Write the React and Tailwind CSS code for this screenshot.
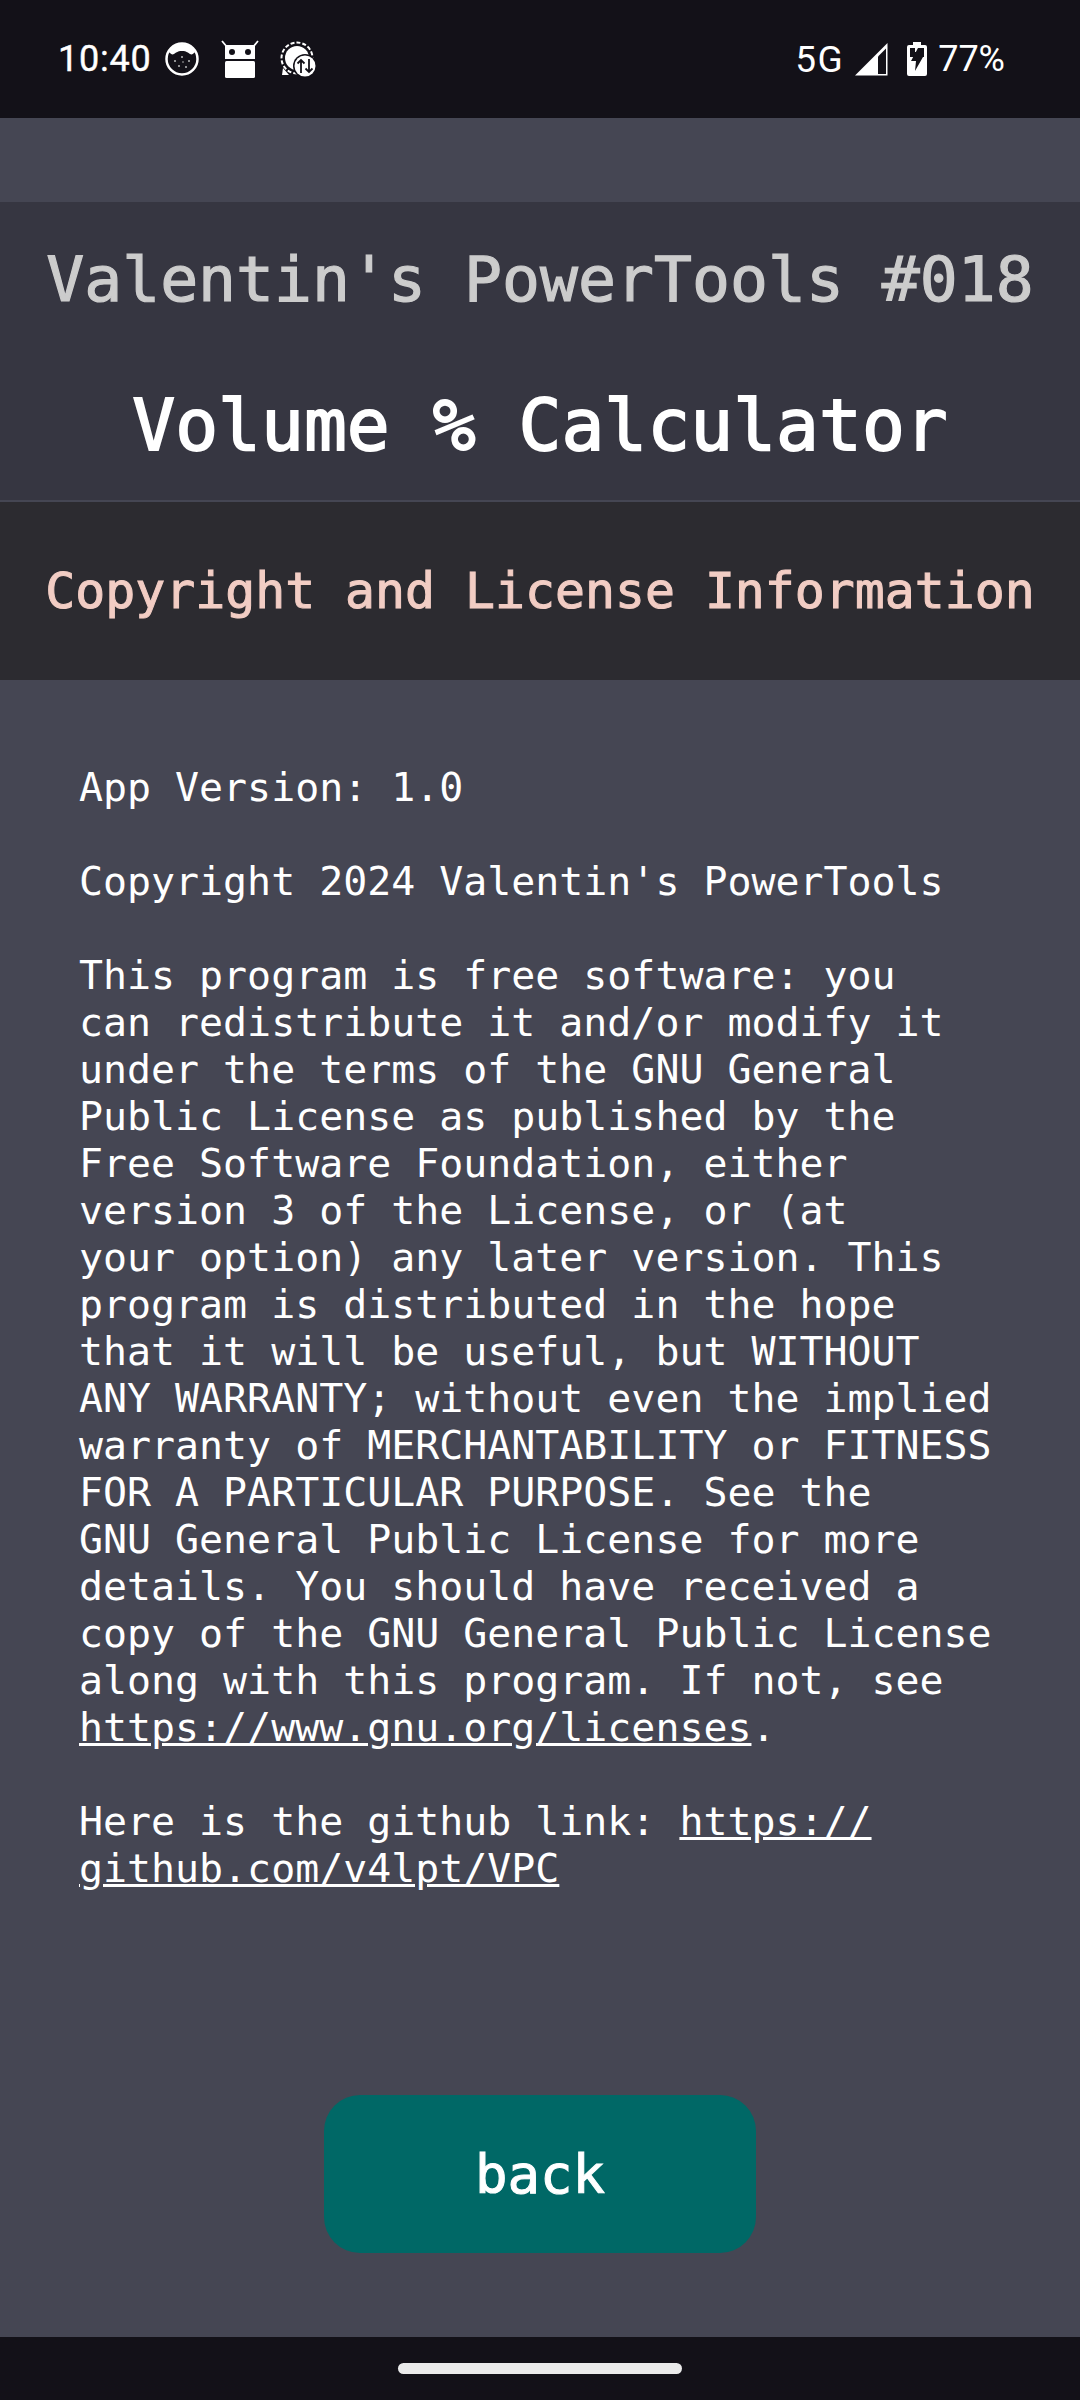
const mono = "font-['DejaVu_Sans_Mono',monospace]";

function Cat() {
  return (
    <svg width="34" height="34" viewBox="0 0 34 34" className="ml-[13px]">
      <circle cx="17" cy="17" r="15.500" fill="#131118" stroke="#fff" strokeWidth="2.500" />
      <path d="M4 10c2 2 3 3 5 2 2-1 3-3 8-3s6 2 8 3c2 1 3 0 5-2-2-5-7-8-13-8S6 5 4 10z" fill="#fff" />
      <g fill="#bbb"><circle cx="10" cy="19" r="1" /><circle cx="17" cy="15" r="1" /><circle cx="24" cy="19" r="1" /><circle cx="14" cy="24" r="1" /><circle cx="21" cy="25" r="1" /><circle cx="18" cy="20" r="0.800" /></g>
    </svg>
  );
}

function Droid() {
  return (
    <svg width="38" height="38" viewBox="0 0 38 38" className="ml-[22px]">
      <path d="M1 1l5 6M37 1l-5 6" fill="none" stroke="#fff" strokeWidth="1.800" />
      <path d="M4 5h30v14H4z" fill="#fff" />
      <circle cx="11" cy="12" r="3" fill="#131118" /><circle cx="27" cy="12" r="3" fill="#131118" />
      <rect x="4" y="21" width="30" height="17" rx="1.500" fill="#fff" />
    </svg>
  );
}

function Signal() {
  return (
    <svg width="36" height="36" viewBox="0 0 36 36" className="ml-[21px]">
      <circle cx="17" cy="17" r="15.500" fill="none" stroke="#fff" strokeWidth="2" strokeDasharray="4 2" />
      <path d="M2 34l1-7 6 7z" fill="#fff" />
      <circle cx="17" cy="17" r="12" fill="#fff" />
      <circle cx="25" cy="25" r="12" fill="#131118" />
      <circle cx="25" cy="25" r="10.500" fill="#fff" />
      <path d="M21 32V19m-3.500 3.500L21 19l3.500 3.500M29 18v13m-3.500-3.500L29 31l3.500-3.500" fill="none" stroke="#131118" strokeWidth="1.800" />
    </svg>
  );
}

function Cell() {
  return (
    <svg width="33" height="33" viewBox="0 0 33 33" className="ml-[11px]">
      <path d="M0 32.500L32.500 0V32.500Z" fill="#fff" />
      <path d="M23 13.500L31 5.500V31H23Z" fill="#131118" />
    </svg>
  );
}

function Battery() {
  return (
    <svg width="20" height="34" viewBox="0 0 20 34" className="ml-[19px]">
      <path d="M6 0h8v3h4a2 2 0 0 1 2 2v27a2 2 0 0 1-2 2H2a2 2 0 0 1-2-2V5a2 2 0 0 1 2-2h4z" fill="#fff" />
      <path d="M3 6h14v9H3z" fill="#131118" />
      <path d="M8 6h4v4H8z" fill="#fff" />
      <path d="M11 6l-7 13h5l-1 10 8-14h-5l2-9z" fill="#131118" />
    </svg>
  );
}

const before = [
  "App Version: 1.0",
  "",
  "Copyright 2024 Valentin's PowerTools",
  "",
  "This program is free software: you",
  "can redistribute it and/or modify it",
  "under the terms of the GNU General",
  "Public License as published by the",
  "Free Software Foundation, either",
  "version 3 of the License, or (at",
  "your option) any later version. This",
  "program is distributed in the hope",
  "that it will be useful, but WITHOUT",
  "ANY WARRANTY; without even the implied",
  "warranty of MERCHANTABILITY or FITNESS",
  "FOR A PARTICULAR PURPOSE. See the",
  "GNU General Public License for more",
  "details. You should have received a",
  "copy of the GNU General Public License",
  "along with this program. If not, see",
];

export default function App() {
  return (
    <div className="flex h-[2400px] w-[1080px] flex-col overflow-hidden bg-[#454653] font-['Roboto',sans-serif] text-white">
      <div className="flex h-[118px] shrink-0 items-center bg-[#131118] pl-[58px] pr-[75px]">
        <span className="text-[36px] leading-none tracking-[0.8px] [-webkit-text-stroke:0.4px_white]">10:40</span>
        <Cat />
        <Droid />
        <Signal />
        <span className="ml-auto text-[37px] leading-none tracking-[1.5px]">5G</span>
        <Cell />
        <Battery />
        <span className="ml-[11px] text-[36px] leading-none">77%</span>
      </div>

      <div className={`${mono} mt-[84px] flex h-[298px] shrink-0 flex-col items-center bg-[#363641]`}>
        <div className="mt-[41px] text-[63.100px] leading-[72px] text-[#cccccc] [-webkit-text-stroke:1.200px_#cccccc]">Valentin's PowerTools #018</div>
        <div className="mt-[73px] text-[71.300px] leading-[76px] text-white [-webkit-text-stroke:1.800px_white]">Volume % Calculator</div>
      </div>
      <div className="h-[2px] shrink-0 bg-[#454653]" />
      <div className={`${mono} flex h-[178px] shrink-0 items-center justify-center bg-[#2c2b30] text-[49.800px] text-[#f2cdc4] [-webkit-text-stroke:1px_#f2cdc4]`}>
        Copyright and License Information
      </div>

      <div className={`${mono} mt-[84px] pl-[79px] text-[39.900px] leading-[47px] whitespace-pre`}>
        {before.map((line, i) => (
          <div key={i} className="h-[47px]">{line}</div>
        ))}
        <div className="h-[47px]"><span className="underline">https://www.gnu.org/licenses</span>.</div>
        <div className="h-[47px]" />
        <div className="h-[47px]">Here is the github link: <span className="underline">https://</span></div>
        <div className="h-[47px]"><span className="underline">github.com/v4lpt/VPC</span></div>
      </div>

      <div className="mt-auto flex shrink-0 justify-center pb-[84px]">
        <button className={`${mono} h-[158px] w-[432px] rounded-[36px] bg-[#006866] text-[54px] text-white [-webkit-text-stroke:1px_white]`}>back</button>
      </div>

      <div className="flex h-[63px] shrink-0 items-start justify-center bg-[#131118] pt-[26px]">
        <div className="h-[11px] w-[284px] rounded-full bg-[#ebebeb]" />
      </div>
    </div>
  );
}
